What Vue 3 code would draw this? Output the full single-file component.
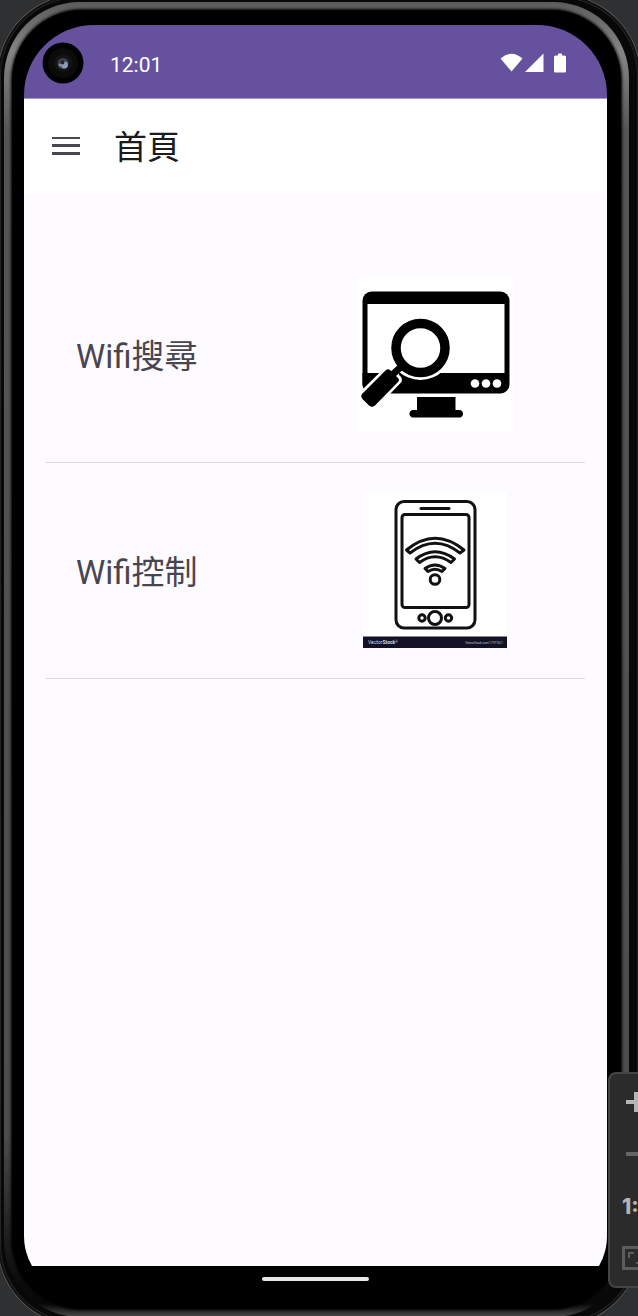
<script setup>
const items = [
  { label: 'Wifi搜尋', art: 'search' },
  { label: 'Wifi控制', art: 'control' }
]
</script>

<template>
  <div class="stage">
    <div class="device">
      <div class="rim">
        <div class="bezel">
          <div class="screen">
            <header class="status">
              <svg class="camera" viewBox="0 0 42 42" aria-hidden="true">
                <circle cx="21" cy="21" r="20.5" fill="#000" />
                <circle cx="21" cy="21" r="15" fill="#0b0b0b" />
                <circle cx="21" cy="21" r="9" fill="#141416" />
                <circle cx="21" cy="21.500" r="5.500" fill="#3d404d" />
                <circle cx="22.500" cy="23" r="3.400" fill="#8f9cb8" />
                <circle cx="20.500" cy="20.500" r="2" fill="#24242e" />
                <circle cx="18" cy="23" r="1.400" fill="#8b8e9a" />
              </svg>
              <time class="clock">12:01</time>
              <svg class="signals" viewBox="0 -1 68 22" aria-hidden="true" fill="#fff">
                <path d="M0.5 5.500 Q11.5 -4 22.5 5.500 L11.5 18.500 Z" />
                <path d="M43.500 0.500 V19 H25 Z" />
                <path d="M58 0.500 H62 V2.500 H64.500 Q66 2.500 66 4 V18 Q66 19.500 64.500 19.500 H55.500 Q54 19.500 54 18 V4 Q54 2.500 55.500 2.500 H58 Z" />
              </svg>
            </header>

            <div class="appbar">
              <button class="menu" type="button" aria-label="Menu">
                <svg viewBox="0 2 28 20" aria-hidden="true" fill="#4a4650">
                  <path d="M0 1H28V4H0ZM0 9H28V12H0ZM0 17H28V20H0Z" />
                </svg>
              </button>
              <h1>首頁</h1>
            </div>

            <main>
              <ul>
                <li v-for="item in items" :key="item.art">
                  <a href="#">
                    <span class="label">{{ item.label }}</span>
                    <svg v-if="item.art === 'search'" class="art" viewBox="0 0 155 155" aria-hidden="true">
                      <rect width="155" height="155" fill="#fff" />
                      <rect x="4.500" y="14.500" width="147" height="102" rx="9" fill="#000" />
                      <rect x="9.500" y="27" width="137" height="69" fill="#fff" />
                      <g fill="#fff">
                        <circle cx="117" cy="106.500" r="4.300" />
                        <circle cx="128" cy="106.500" r="4.300" />
                        <circle cx="139" cy="106.500" r="4.300" />
                      </g>
                      <path d="M59 120H97.500V133H102.500A4 4 0 0 1 102.500 140.500H54A4 4 0 0 1 54 133H59Z" fill="#000" />
                      <path d="M0 117 L27 90 L40 86 L41 98 Q45 101 43.500 105 L32 117 H0Z" fill="#fff" />
                      <path d="M4.500 96 H21 L5.500 111 Q4.500 109 4.500 106Z" fill="#000" />
                      <circle cx="62.500" cy="71" r="32" fill="#fff" />
                      <circle cx="62.500" cy="71" r="24.500" fill="#fff" stroke="#000" stroke-width="9.500" />
                      <path d="M34 98 L44 89" stroke="#000" stroke-width="7" />
                      <path d="M28 93 Q30 91.500 32 93 L40 101 Q42 103 40 105 L17 128.500 Q14 131 11 128.500 L4.500 122 Q2 119 4.500 116.500Z" fill="#000" />
                    </svg>
                    <svg v-else class="art" viewBox="0 0 144 155" aria-hidden="true">
                      <rect width="144" height="155" fill="#fff" />
                      <g fill="none" stroke="#111" stroke-width="3" stroke-linejoin="round" stroke-linecap="round">
                        <rect x="33" y="8.500" width="79" height="126.500" rx="8" />
                        <rect x="39" y="21.500" width="67" height="93" rx="3" />
                        <path d="M58 15.500H86" />
                        <path d="M43.500 57 Q72 33.500 101 57 L97 60 Q72 40.500 47 60 Z" />
                        <path d="M53 66 Q72 51.500 91.500 66 L88 69.500 Q72 58 56.500 69.500 Z" />
                        <path d="M62 75.500 Q72 68.500 82 75.500 L79 78.500 Q72 74 65 78.500 Z" />
                        <circle cx="72" cy="86.500" r="4.800" />
                        <circle cx="72" cy="125" r="6.500" />
                        <circle cx="59" cy="125" r="3.200" />
                        <circle cx="85.500" cy="125" r="3.200" />
                      </g>
                      <rect y="143.500" width="144" height="11.500" fill="#121126" />
                      <text x="5" y="151" class="brand">Vector<tspan font-weight="700">Stock</tspan><tspan class="mark" dy="-1">®</tspan></text>
                      <text x="140" y="151" class="credit" text-anchor="end">VectorStock.com/17977621</text>
                    </svg>
                  </a>
                </li>
              </ul>
            </main>

            <footer class="gesture"><span></span></footer>
          </div>
        </div>
      </div>
    </div>

    <div class="zoom">
      <button type="button" aria-label="Zoom in">
        <svg viewBox="0 0 18 20" aria-hidden="true" fill="#b4b5b7"><path d="M0 8H8V0H12V8H18V12H12V20H8V12H0Z" /></svg>
      </button>
      <button type="button" aria-label="Zoom out">
        <svg viewBox="0 0 18 20" aria-hidden="true"><path d="M0 8H18V12H0Z" fill="#646566" /></svg>
      </button>
      <button type="button">1:1</button>
      <button type="button" aria-label="Fit to window">
        <svg class="fit" viewBox="0 0 26 24" aria-hidden="true" fill="none" stroke="#5b5c5d">
          <rect x="1.500" y="1.500" width="23" height="21" stroke-width="3" />
          <path d="M7 12V7H12M19 12V17H14" stroke-width="2" />
        </svg>
      </button>
    </div>
  </div>
</template>

<style>
body {
  background: #2f3032;
}
</style>

<style scoped>
* {
  box-sizing: border-box;
}

.stage {
  position: relative;
  display: flex;
  min-height: 100vh;
  overflow: hidden;
  background: #2f3032;
  font-family: Roboto, "Noto Sans CJK TC", sans-serif;
}

.device,
.rim,
.bezel,
.screen {
  display: flex;
  flex: 1;
  min-width: 0;
}

.device {
  margin: -6px -3px -10px;
  padding: 8px 12px 9px 7px;
  border-radius: 82px;
  background: #080808;
  box-shadow: inset 0 0 0 1px #5a5a5a, inset 0 0 0 3px #111, inset 0 0 0 4px #242424;
}

.rim {
  padding: 8px;
  border-radius: 76px;
  background: linear-gradient(to bottom, #5c5c5c 0, #858585 50px, #555 130px, #4d4d4d 86%, #2a2a2a 92%, #0c0c0c 97%, #080808 99%, #4a4a4a 100%);
}

.bezel {
  padding: 15px 14px 13px 12px;
  border-radius: 70px;
  background: #000;
  box-shadow: 0 0 3px 1px #000;
}

.screen {
  flex-direction: column;
  overflow: hidden;
  border-radius: 70px 70px 60px 60px;
  background: #000;
}

.status {
  display: flex;
  align-items: center;
  height: 74px;
  padding: 2px 39px 0 18px;
  border-bottom: 1px solid #a89bc9;
  background: #65519e;
  color: #fff;
}

.camera {
  width: 42px;
  height: 42px;
}

.clock {
  margin-left: 26px;
  padding-top: 4px;
  font-size: 21px;
  line-height: 24px;
}

.signals {
  width: 68px;
  height: 22px;
  margin-left: auto;
}

.appbar {
  display: flex;
  align-items: center;
  gap: 34px;
  height: 95px;
  padding: 0 28px;
  background: #fff;
}

.menu {
  display: flex;
  padding: 0;
  border: 0;
  background: none;
}

.menu svg {
  width: 28px;
  height: 20px;
}

h1 {
  margin: 0;
  padding-top: 2px;
  color: #1c1b1f;
  font-size: 33px;
  font-weight: 400;
  line-height: 40px;
}

main {
  flex: 1;
  padding: 53px 22px 0;
  background: #fdfbff;
}

ul {
  margin: 0;
  padding: 0;
  list-style: none;
}

li {
  border-bottom: 1px solid #dad8dc;
}

a {
  display: grid;
  grid-template-columns: 4fr 5fr;
  align-items: center;
  padding: 30px 0;
  color: #49454f;
  text-decoration: none;
}

.label {
  padding: 4px 0 0 30px;
  font-size: 33px;
  line-height: 40px;
  white-space: nowrap;
}

.art {
  height: 155px;
  justify-self: center;
}

.brand {
  fill: #d8d8e0;
  font-size: 5px;
}

.mark {
  font-size: 3px;
}

.credit {
  fill: #c5c5ce;
  font-size: 3px;
}

.gesture {
  display: flex;
  justify-content: center;
  height: 30px;
  padding-top: 11px;
  background: #000;
}

.gesture span {
  width: 107px;
  height: 4px;
  border-radius: 2px;
  background: #e8e8e8;
}

.zoom {
  position: absolute;
  right: -24px;
  bottom: 28px;
  display: flex;
  flex-direction: column;
  width: 54px;
  padding: 2px 0;
  border: 2px solid #434445;
  border-radius: 8px;
  background: #2b2b2c;
}

.zoom button {
  display: flex;
  align-items: center;
  justify-content: center;
  height: 52px;
  padding: 0;
  border: 0;
  background: none;
  color: #b4b5b7;
  font-family: Inter, sans-serif;
  font-size: 21px;
  font-weight: 800;
}

.zoom svg {
  width: 18px;
  height: 20px;
}

.zoom .fit {
  width: 26px;
  height: 24px;
}
</style>
